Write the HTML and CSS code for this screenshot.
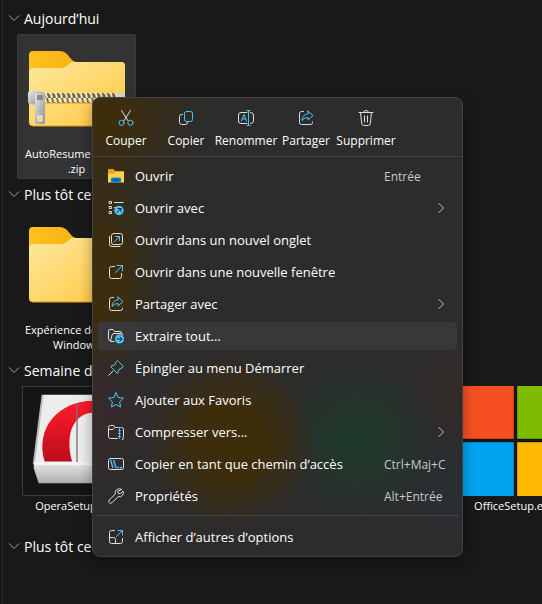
FILE: index.html
```html
<!DOCTYPE html>
<html lang="fr">
<head>
<meta charset="utf-8">
<meta name="viewport" content="width=device-width, initial-scale=1">
<title>Téléchargements</title>
<link rel="stylesheet" href="styles.css">
</head>
<body>
<svg width="0" height="0" class="defs" aria-hidden="true">
  <defs>
    <linearGradient id="front" x1="0" y1="0" x2="1" y2="1"><stop offset="0" stop-color="#ffe8a0"/><stop offset="1" stop-color="#ffc83c"/></linearGradient>
    <linearGradient id="back" x1="0" y1="0" x2="1" y2="0"><stop offset="0" stop-color="#ffc01c"/><stop offset="1" stop-color="#eda512"/></linearGradient>
    <linearGradient id="metal" x1="0" y1="0" x2="1" y2="1"><stop offset="0" stop-color="#e4e4e4"/><stop offset="1" stop-color="#8e8e8e"/></linearGradient>
    <linearGradient id="red" x1="0" y1="0" x2="0" y2="1"><stop offset="0" stop-color="#ff1b2d"/><stop offset="1" stop-color="#bd0d1b"/></linearGradient>
    <linearGradient id="box" x1="0" y1="0" x2="0" y2="1"><stop offset="0" stop-color="#e6e6e6"/><stop offset="1" stop-color="#adadad"/></linearGradient>
    <pattern id="teeth" width="5" height="8" patternUnits="userSpaceOnUse"><rect width="5" height="8" fill="#7c6a38"/><path d="M0 0h3l1 4h-3zM2 4h2l1 4h-2z" fill="#f0ead8"/></pattern>
    <symbol id="folder" viewBox="0 0 98 78">
      <path d="M1 20V5q0-4 4-4h27q4 0 7 3l5 6q2 2 5 2h44q4 0 4 4v30H1z" fill="url(#back)"/>
      <path d="M1 22q0-4 4-4h28q4 0 7-3l2-2q1-1 4-1h47q4 0 4 4v56q0 4-4 4H5q-4 0-4-4z" fill="url(#front)"/>
      <path d="M1 72q0 4 4 4h88q4 0 4-4" fill="none" stroke="#e09c16"/>
    </symbol>
    <symbol id="share" viewBox="0 0 16 16">
      <path d="M5.500 1.500H3.500q-2 0-2 2v9q0 2 2 2h9q2 0 2-2V12" class="w"/>
      <path d="M10 1l5 4.500-5 4.500V7.500Q6.500 7.300 4 10.500 4.300 4.500 10 3.700z" class="b"/>
    </symbol>
  </defs>
</svg>

<main class="files">
  <section class="group">
    <h2 class="heading"><svg viewBox="0 0 12 12"><path d="M1 3.500l5 5 5-5"/></svg>Aujourd’hui</h2>
    <div class="grid">
      <figure class="tile selected">
        <div class="thumb">
          <svg class="folder" viewBox="0 0 98 78"><use href="#folder" width="98" height="78"/>
            <rect x="14" y="43" width="83" height="10" fill="url(#teeth)"/>
            <path d="M14 53h83" stroke="#d99b1c"/><rect x="89" y="43" width="8" height="9" fill="#d8d8d8"/>
            <path d="M0 42q8-3 17 1v9q-9 5-17 1z" fill="url(#metal)"/>
            <path d="M7 44h10v28q0 2-2 2H9q-2 0-2-2z" fill="url(#metal)"/>
            <rect x="9" y="45" width="6" height="5" fill="#8a8a8a"/><rect x="10" y="66" width="4" height="5" fill="#ffd45d" stroke="#eee"/></svg>
        </div>
        <figcaption><span class="start">AutoResume</span>.zip</figcaption>
      </figure>
    </div>
  </section>
  <section class="group">
    <h2 class="heading"><svg viewBox="0 0 12 12"><path d="M1 3.500l5 5 5-5"/></svg>Plus tôt cette</h2>
    <div class="grid">
      <figure class="tile">
        <div class="thumb"><svg class="folder" viewBox="0 0 98 78"><use href="#folder" width="98" height="78"/></svg></div>
        <figcaption><span class="start">Expérience de</span>Windows</figcaption>
      </figure>
    </div>
  </section>
  <section class="group">
    <h2 class="heading"><svg viewBox="0 0 12 12"><path d="M1 3.500l5 5 5-5"/></svg>Semaine dernière</h2>
    <div class="grid">
      <figure class="tile">
        <div class="thumb">
          <svg class="full framed" viewBox="0 0 110 110">
            <path d="M20 8h70l10 70H11z" fill="#ededed"/>
            <path d="M20 8L11 78" stroke="#bbb" stroke-width="2"/>
            <path d="M22 76C12 42 36 14 72 14v12C50 27 43 50 50 76z" fill="url(#red)"/>
            <path d="M55 17v60" stroke="#777" stroke-width="2" opacity=".7"/>
            <path d="M11 78h89v8l-5 12H16l-5-15z" fill="url(#box)"/><path d="M11 78h89" stroke="#f5f5f5" stroke-width="3"/>
          </svg>
        </div>
        <figcaption>OperaSetup.exe</figcaption>
      </figure>
      <figure class="tile fourth">
        <div class="thumb">
          <svg class="full" viewBox="0 0 110 110">
            <path d="M0 0h54v53H0z" fill="#f65022"/><path d="M57 0h53v53H57z" fill="#80bb03"/>
            <path d="M0 56h54v54H0z" fill="#03a4ef"/><path d="M57 56h53v54H57z" fill="#ffb902"/>
            <path d="M0 53h54V0M57 0v53h53M0 56h54v54M57 110V56h53" fill="none" stroke="#000" stroke-opacity=".35"/>
          </svg>
        </div>
        <figcaption>OfficeSetup.exe</figcaption>
      </figure>
    </div>
  </section>
  <section class="group">
    <h2 class="heading"><svg viewBox="0 0 12 12"><path d="M1 3.500l5 5 5-5"/></svg>Plus tôt ce mois</h2>
  </section>
</main>

<div class="menu">
  <div class="quick">
    <button type="button"><svg viewBox="0 0 16 16"><path d="M3.500 0.500l6.700 10.500M12.500 0.500L5.800 11" class="w"/><circle cx="3.600" cy="12.800" r="2.600" class="b"/><circle cx="12.400" cy="12.800" r="2.600" class="b"/></svg>Couper</button>
    <button type="button"><svg viewBox="0 0 16 16"><path d="M4.500 4.500h-1q-2 0-2 2v6q0 2 2 2h4q2 0 2-2" class="w"/><rect x="6.500" y="1.500" width="8" height="10" rx="2" class="b"/></svg>Copier</button>
    <button type="button"><svg viewBox="0 0 16 16"><path d="M9 2.500H3q-2.500 0-2.500 2.500v6q0 2.500 2.500 2.500h6M12.500 2.500q3 0 3 2.500v6q0 2.500-3 2.500" class="w"/><path d="M3.500 11L6 4.500 8.500 11M4.300 9h3.400M9 .5h3M9 15.500h3M10.500 .5v15" class="b"/></svg>Renommer</button>
    <button type="button"><svg viewBox="0 0 16 16"><use href="#share"/></svg>Partager</button>
    <button type="button"><svg viewBox="0 0 16 16"><path d="M1 2.500h14M5.500 2.500q0-2 2.500-2t2.500 2M2.500 2.500l1.200 11q.2 2 2 2h4.600q1.800 0 2-2l1.200-11M6.500 6v6M9.500 6v6" class="w"/></svg>Supprimer</button>
  </div>
  <div class="items">
    <button type="button"><svg viewBox="0 0 16 16"><path d="M0 13.500V2q0-1 1-1h4.500L7 3h8q1 0 1 1v9.500z" fill="#e8a315"/><path d="M0 5.500h6L7.500 4H16v10.500H0z" fill="#ffd04a"/><path d="M3 14.500V11q0-1.500 1.500-1.500h7Q13 9.500 13 11v3.500z" fill="#0f7cd5"/><path d="M5 12h6" stroke="#073e75"/></svg><span>Ouvrir</span><kbd>Entrée</kbd></button>
    <button type="button"><svg viewBox="0 0 16 16"><path d="M1.500 1.500h2v2h-2zM1.500 6.500h2v2h-2zM1.500 11.500h2v2h-2zM6.500 2.500H15M6.500 7.500H8" class="w"/><circle cx="11" cy="10.500" r="4.700" fill="#4cc2ff"/><path d="M9 12.500l4-4M10 8.500h3v3" class="k"/></svg><span>Ouvrir avec</span><svg class="more" viewBox="0 0 12 12"><path d="M3.500 1l5 5-5 5"/></svg></button>
    <button type="button"><svg viewBox="0 0 16 16"><rect x="3.500" y="1.500" width="11" height="11" rx="2" class="w"/><path d="M1.500 4.500v7.500q0 2.500 2.500 2.500h8" class="w"/><path d="M6 10l5.500-5.500M7.500 4.500h4v4" class="b"/></svg><span>Ouvrir dans un nouvel onglet</span></button>
    <button type="button"><svg viewBox="0 0 16 16"><path d="M6.500 2.500h-3q-2 0-2 2v8q0 2 2 2h8q2 0 2-2v-3" class="w"/><path d="M7.500 8.500l7-7M9 1.500h5.500V7" class="b"/></svg><span>Ouvrir dans une nouvelle fenêtre</span></button>
    <button type="button"><svg viewBox="0 0 16 16"><use href="#share"/></svg><span>Partager avec</span><svg class="more" viewBox="0 0 12 12"><path d="M3.500 1l5 5-5 5"/></svg></button>
    <button type="button" class="hover"><svg viewBox="0 0 16 16"><path d="M6 13.500H2.500L.5 11V3q0-1.500 1.500-1.500h3L6.500 3.500H12q1.500 0 1.500 1.500v.5M2.500 13.500L4 7q.3-1.500 2-1.500h7q2 0 1.800 1.500" class="w"/><circle cx="11.500" cy="11" r="4.500" fill="#4cc2ff"/><path d="M9 11h5M12 9l2 2-2 2" class="k"/></svg><span>Extraire tout...</span></button>
    <button type="button"><svg viewBox="0 0 16 16"><path d="M5 11L.7 15.300" class="w"/><path d="M9.800 .8L15.200 6.200 14 8l-3 1.300-1.500 4.200-7-7L6.700 5 8 2z" class="b"/></svg><span>Épingler au menu Démarrer</span></button>
    <button type="button"><svg viewBox="0 0 16 16"><path d="M8 .8l2.200 4.700 5.200.7-3.800 3.600 1 5.200L8 12.500 3.400 15l1-5.200L.6 6.200l5.200-.7z" class="b"/></svg><span>Ajouter aux Favoris</span></button>
    <button type="button"><svg viewBox="0 0 16 16"><path d="M9.500 14.500h-7q-2 0-2-2v-9q0-2 2-2h3l2 2h6q2 0 2 2v7q0 4-2 4M.5 5.500h4.500l2-2" class="w"/><path d="M10 3.500h3.500M11.500 4v10.500M10.500 6.500h2M10.500 9.500h2M10.500 12.500h2" class="b"/></svg><span>Compresser vers...</span><svg class="more" viewBox="0 0 12 12"><path d="M3.500 1l5 5-5 5"/></svg></button>
    <button type="button"><svg viewBox="0 0 16 16"><rect x=".5" y="2.500" width="15" height="11" rx="2" class="w"/><path d="M2.800 4.500l2 7M5.800 4.500l2 7M9.500 11.500h1M12.500 11.500h1" class="b bold"/></svg><span>Copier en tant que chemin d’accès</span><kbd>Ctrl+Maj+C</kbd></button>
    <button type="button"><svg viewBox="0 0 16 16"><path d="M13.500 1.300Q9.500-.3 7.500 3q-.7 1.500-.2 3L1.300 12q-1.200 1.500 0 2.700t2.700 0l6-6q3 .8 4.700-1.700 1.200-2 .3-4l-2.800 2.800-1.900-.3-.4-1.800z" class="w"/></svg><span>Propriétés</span><kbd>Alt+Entrée</kbd></button>
  </div>
  <div class="items last">
    <button type="button"><svg viewBox="0 0 16 16"><path d="M6.500 1.500h-3q-2 0-2 2v9q0 2 2 2h9q2 0 2-2v-3M1.500 8.500h4q2 0 2 2v4" class="w"/><path d="M8.500 7.500l6-6M10 1.500h4.500V6" class="b"/></svg><span>Afficher d’autres d’options</span></button>
  </div>
</div>
</body>
</html>
```
FILE: styles.css
```css
* { box-sizing: border-box; }

body {
  margin: 0;
  position: relative;
  min-height: 100vh;
  overflow: hidden;
  background: #191919;
  color: #fff;
  font-family: "Open Sans", "Noto Sans", sans-serif;
  font-size: 13px;
}

.defs { position: absolute; }

.files {
  min-height: 100vh;
  margin-left: 2px;
  padding: 2px 0 0 5px;
  border-left: 1px solid #2b2b2b;
  overflow: hidden;
}

.group { height: 176px; }
.group:last-child { height: auto; }

.heading {
  display: flex;
  align-items: center;
  gap: 4px;
  height: 32px;
  margin: 0;
  font-size: 14px;
  font-weight: 400;
  white-space: nowrap;
}

.heading svg { width: 12px; height: 12px; }
.heading path, .more path { fill: none; stroke: #a6a6a6; stroke-width: 1; }

.grid {
  display: grid;
  grid-template-columns: repeat(4, 119px);
  column-gap: 27px;
  padding-left: 9px;
}

.tile {
  height: 145px;
  margin: 0;
  padding: 0 4px;
  border: 1px solid transparent;
  border-radius: 2px;
}

.tile.selected { background: #333; border-color: #3b3b3b; }
.tile.fourth { grid-column: 4; }

.thumb {
  display: flex;
  align-items: center;
  justify-content: center;
  height: 108px;
  margin-bottom: 3px;
}

.folder { width: 98px; height: 78px; }
.full { flex: none; width: 110px; height: 110px; }
.framed { border: 1px solid #3c3c3c; background: #151515; }

figcaption {
  font-size: 11px;
  line-height: 15px;
  text-align: center;
  white-space: nowrap;
}

.start { display: block; padding-left: 3px; text-align: left; }

.menu {
  position: absolute;
  left: 92px;
  top: 97px;
  width: 371px;
  border: 1px solid #414141;
  border-radius: 8px;
  box-shadow: 0 6px 14px rgba(0, 0, 0, .35);
  background:
    radial-gradient(circle at 0 10px, #3d2d0c 25px, transparent 115px),
    radial-gradient(ellipse 64px 110px at 8px 175px, #3d2d0c 30%, transparent),
    radial-gradient(ellipse 70px 90px at 0 315px, #392a2b, transparent),
    radial-gradient(circle at 137px 343px, #3e2d0b 34px, transparent 88px),
    radial-gradient(circle at 265px 342px, #1f3a2b 10px, transparent 80px),
    radial-gradient(circle at 370px 300px, #342a28, transparent 60px),
    radial-gradient(circle at 370px 380px, #292e34, transparent 80px),
    #2c2c2c;
}

button {
  border: 0;
  background: none;
  color: inherit;
  font: inherit;
}

.quick {
  display: flex;
  height: 59px;
  padding: 0 3px;
  border-bottom: 1px solid #404040;
}

.quick button {
  display: flex;
  flex-direction: column;
  align-items: center;
  gap: 6px;
  width: 60px;
  padding: 12px 0 0;
  font-size: 12px;
  line-height: 18px;
  white-space: nowrap;
}

.menu svg { flex: none; width: 16px; height: 16px; }
.menu svg.more { width: 12px; height: 12px; margin-right: 4px; }
.menu .more path { stroke: #c8c8c8; }

.w, .b, .k { fill: none; stroke-width: 1; stroke-linejoin: round; stroke-linecap: round; }
.w { stroke: #dedede; }
.b { stroke: #4cc2ff; }
.k { stroke: #10202c; }
.bold { stroke-width: 1.4; }

.items {
  display: grid;
  gap: 4px;
  padding: 5px;
}

.items button {
  display: flex;
  align-items: center;
  gap: 11px;
  height: 28px;
  padding: 0 6px 0 10px;
  border-radius: 4px;
  text-align: left;
  white-space: nowrap;
}

.items span { flex: 1; }

.items .hover { background: #383838; }

.items kbd {
  width: 67px;
  color: #c8c8c8;
  font: inherit;
  font-size: 12px;
}

.last {
  margin: 0 3px;
  padding: 7px 2px 5px;
  border-top: 1px solid #414141;
}
```
